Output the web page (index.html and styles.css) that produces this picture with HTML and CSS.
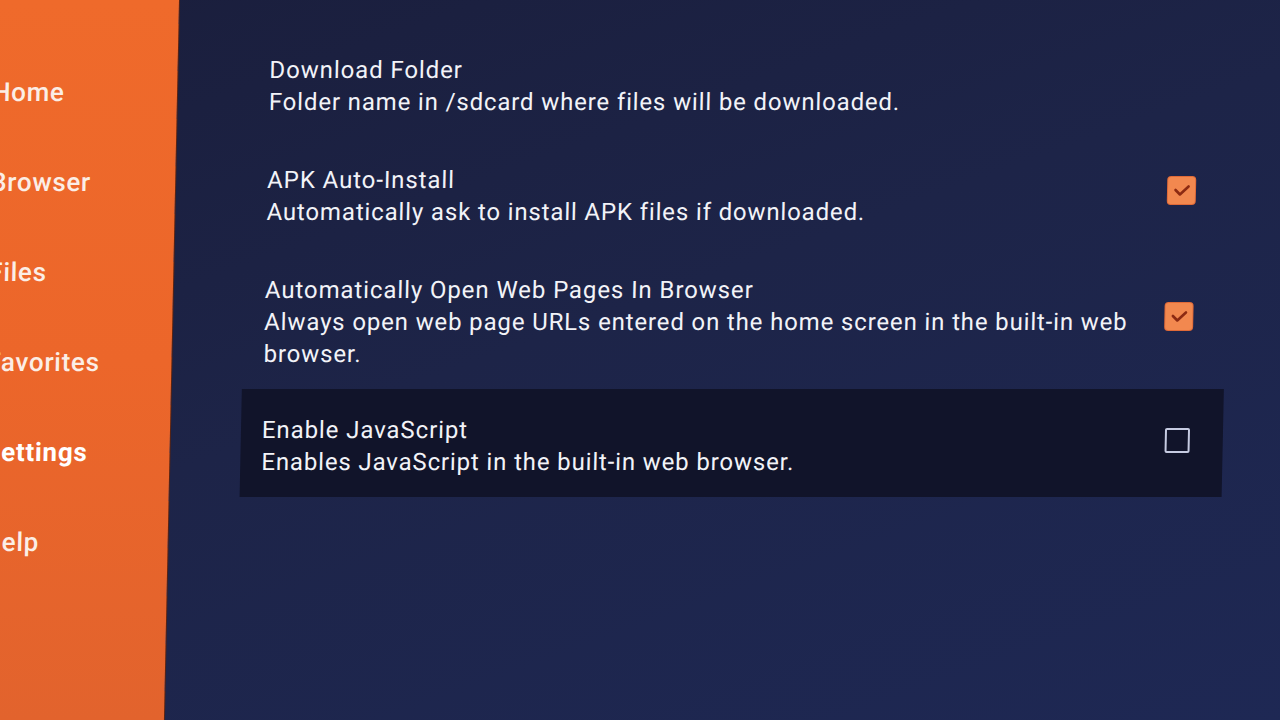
FILE: index.html
```html
<!DOCTYPE html>
<html lang="en">
<head>
<meta charset="utf-8">
<title>Settings</title>
<link rel="stylesheet" href="styles.css">
</head>
<body>
<div class="screen">
  <nav class="sidebar">
    <ul class="nav">
      <li class="nav-item">Home</li>
      <li class="nav-item">Browser</li>
      <li class="nav-item">Files</li>
      <li class="nav-item">Favorites</li>
      <li class="nav-item active">Settings</li>
      <li class="nav-item">Help</li>
    </ul>
  </nav>
  <main class="main">
    <div class="settings">
      <div class="row">
        <div class="text">
          <div class="title">Download Folder</div>
          <div class="desc">Folder name in /sdcard where files will be downloaded.</div>
        </div>
      </div>
      <div class="row">
        <div class="text">
          <div class="title">APK Auto-Install</div>
          <div class="desc">Automatically ask to install APK files if downloaded.</div>
        </div>
        <span class="check on"><svg viewBox="0 0 26 26" width="26" height="26"><path d="M6.5 13 L11 17.5 L19.5 9.5" fill="none" stroke="#8c2a12" stroke-width="2.6" stroke-linecap="round" stroke-linejoin="round"/></svg></span>
      </div>
      <div class="row">
        <div class="text">
          <div class="title">Automatically Open Web Pages In Browser</div>
          <div class="desc">Always open web page URLs entered on the home screen in the built-in web browser.</div>
        </div>
        <span class="check on"><svg viewBox="0 0 26 26" width="26" height="26"><path d="M6.5 13 L11 17.5 L19.5 9.5" fill="none" stroke="#8c2a12" stroke-width="2.6" stroke-linecap="round" stroke-linejoin="round"/></svg></span>
      </div>
      <div class="row focused">
        <div class="text">
          <div class="title">Enable JavaScript</div>
          <div class="desc">Enables JavaScript in the built-in web browser.</div>
        </div>
        <span class="check off"></span>
      </div>
    </div>
  </main>
</div>
</body>
</html>
```

FILE: styles.css
```css
html, body {
  margin: 0;
  padding: 0;
  background: #1c2450;
  overflow: hidden;
}

body {
  width: 1280px;
  height: 720px;
  font-family: Roboto, "Noto Sans", sans-serif;
  color: #f2f3f8;
}

.screen {
  width: 1310px;
  height: 720px;
  display: flex;
  transform: skewX(-1.2deg);
  transform-origin: 0 0;
  background: linear-gradient(160deg, #1a1e3c 0%, #1d2448 45%, #1e2854 100%);
}

.sidebar {
  width: 179px;
  flex: none;
  background: linear-gradient(180deg, #ef6a2b 0%, #ec662a 50%, #e2632d 100%);
  overflow: hidden;
  box-shadow: 1px 0 0 #5a2413;
}

.nav {
  list-style: none;
  margin: 0;
  padding: 47px 0 0 0;
}

.nav-item {
  height: 90px;
  line-height: 90px;
  font-size: 26px;
  font-weight: 500;
  letter-spacing: 0.7px;
  text-indent: -6px;
  white-space: nowrap;
  color: #fbeee6;
}

.nav-item.active {
  font-weight: 700;
  color: #ffffff;
}

.main {
  flex: 1;
  padding: 31px 0 0 71px;
}

.settings {
  width: 982px;
  display: flex;
  flex-direction: column;
}

.row {
  display: flex;
  align-items: center;
  justify-content: space-between;
  padding: 23px 33px 23px 21px;
  min-height: 64px;
}

.row.focused {
  background: #11142a;
  margin-top: -4px;
  padding: 25px 33px 19px 21px;
}

.text {
  flex: 1;
  max-width: 880px;
}

.title {
  font-size: 24px;
  line-height: 32px;
  letter-spacing: 0.9px;
}

.desc {
  font-size: 24px;
  line-height: 32px;
  letter-spacing: 0.85px;
}

.check {
  width: 27px;
  height: 27px;
  box-sizing: border-box;
  border-radius: 3px;
  flex: none;
  margin-bottom: 12px;
  display: flex;
  align-items: center;
  justify-content: center;
}

.check.on {
  background: #f2884f;
  box-shadow: 0 0 0 1px #e06a38;
}

.check.off {
  width: 25px;
  height: 25px;
  border: 2.5px solid #c6cbe2;
  border-radius: 2px;
}
```
